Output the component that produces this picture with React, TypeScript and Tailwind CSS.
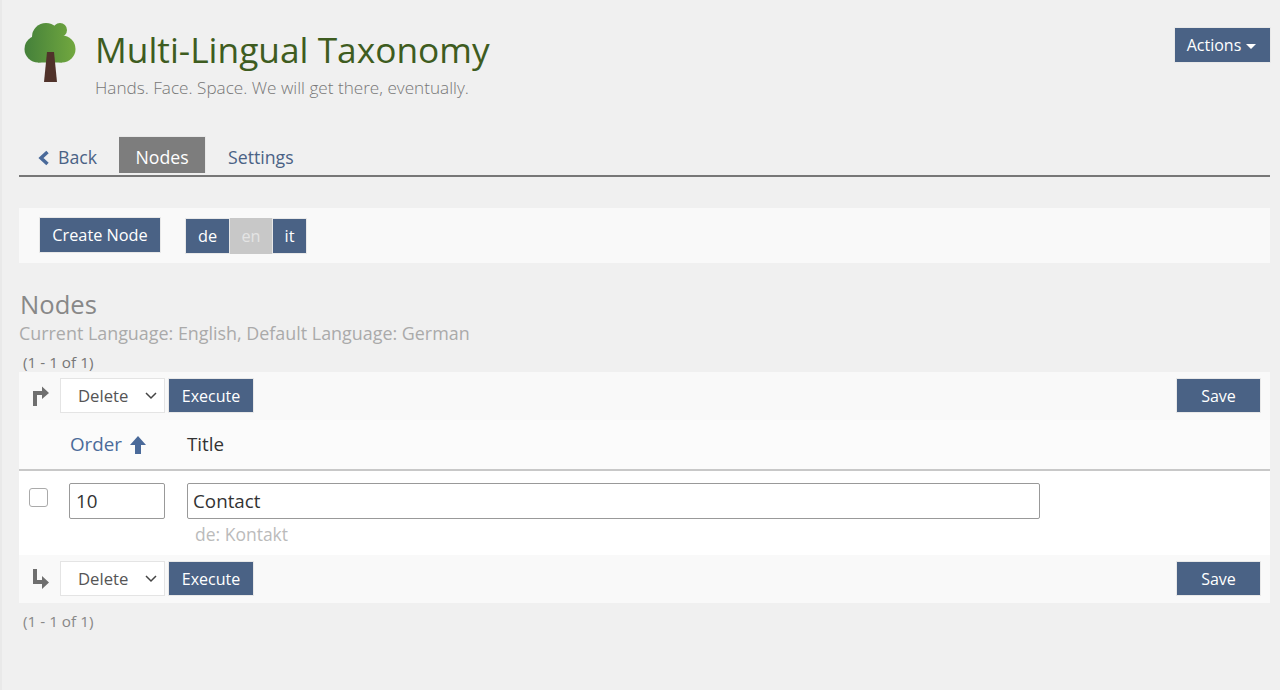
const FONT = "font-['Open_Sans','Liberation_Sans',sans-serif]";
const BTN = "flex items-center justify-center bg-[#4a6285] text-white border border-[#e8e8e8]";

function TreeLogo() {
  return (
    <svg width="54" height="62" viewBox="0 0 54 62" className="block">
      <defs>
        <linearGradient id="crown" gradientUnits="userSpaceOnUse" x1="0" x2="52" y1="0" y2="0">
          <stop offset="0" stopColor="#44803a" />
          <stop offset="1" stopColor="#72a83f" />
        </linearGradient>
      </defs>
      <g fill="url(#crown)">
        <circle cx="22" cy="15" r="14" />
        <circle cx="36" cy="8" r="7" />
        <circle cx="14" cy="27" r="13.5" />
        <circle cx="38" cy="27" r="13.5" />
        <rect x="14" y="12" width="24" height="28.5" />
      </g>
      <path fill="#50322a" d="M23 30 H30 L33 60 H20 Z" />
    </svg>
  );
}

function DeleteSelect() {
  return (
    <div className="flex h-[35px] w-[105px] items-center justify-between border border-[#e4e4e4] bg-white pl-[17px] pr-[6px] text-[16.7px] text-[#555]">
      <span>Delete</span>
      <svg width="14" height="14" viewBox="0 0 14 14" fill="none" stroke="#444" strokeWidth="1.5" className="mb-[1px]">
        <path d="M2 5l5 5 5-5" />
      </svg>
    </div>
  );
}

function ActionBar({ icon }: { icon: React.ReactNode }) {
  return (
    <div className="flex h-[48px] items-start justify-between bg-[#f9f9f9] pl-[12px] pr-[9px] pt-[6px]">
      <div className="flex items-center">
        <div className="w-[29px]">{icon}</div>
        <DeleteSelect />
        <div className={`${BTN} ml-[3px] h-[35px] w-[86px] text-[16px]`}>Execute</div>
      </div>
      <div className={`${BTN} h-[35px] w-[85px] text-[16px]`}>Save</div>
    </div>
  );
}

export default function App() {
  return (
    <div className={`${FONT} h-[690px] w-[1280px] overflow-hidden border-l-2 border-[#e9e9e9] bg-[#f0f0f0] pl-[17px] pr-[10px]`}>
      <header className="flex h-[137px] items-start justify-between">
        <div className="flex items-start">
          <div className="ml-[5px] mt-[22px]">
            <TreeLogo />
          </div>
          <div className="ml-[17px] mt-[24px]">
            <h1 className="text-[35.3px] leading-[50px] text-[#3e5c20]">Multi-Lingual Taxonomy</h1>
            <p className="mt-[2px] text-[17.15px] font-light leading-[24px] text-[#777]">
              Hands. Face. Space. We will get there, eventually.
            </p>
          </div>
        </div>
        <div className={`${BTN} -mr-[1px] mt-[27px] h-[36px] w-[97px] gap-[5px] pr-[2px] text-[16px]`}>
          Actions
          <span className="mt-[2px] border-x-[5px] border-t-[5px] border-x-transparent border-t-white" />
        </div>
      </header>

      <nav className="flex h-[40px] items-start border-b-2 border-[#777] text-[17.7px] text-[#4a6285]">
        <div className="flex h-[37px] w-[100px] items-center pl-[18px] pt-[4px]">
          <svg width="14" height="16" viewBox="0 0 14 16" className="mr-[7px]" fill="none" stroke="#4a6a9a" strokeWidth="3.5">
            <path d="M10.5 2 L4 8 L10.5 14" />
          </svg>
          Back
        </div>
        <div className="-mt-[1px] flex h-[37px] w-[87px] items-center justify-center border-r border-t border-[#e8e8e8] bg-[#7d7d7d] pt-[5px] text-white">
          Nodes
        </div>
        <div className="ml-[22px] flex h-[37px] items-center pt-[4px]">Settings</div>
      </nav>

      <section className="mt-[31px] flex h-[55px] items-start bg-[#f9f9f9] pl-[20px] pt-[9px]">
        <div className={`${BTN} h-[36px] w-[122px] text-[16.3px]`}>Create Node</div>
        <div className="ml-[24px] mt-[1px] flex h-[36px] text-[16.3px]">
          <div className={`${BTN} w-[45px] text-[#e8e8e8]`}>de</div>
          <div className="flex w-[42px] items-center justify-center bg-[#c8c8c8] text-[#e4e4e4]">en</div>
          <div className={`${BTN} w-[35px] text-[#e8e8e8]`}>it</div>
        </div>
      </section>

      <h2 className="ml-[1px] mt-[25px] text-[25.6px] leading-[34px] text-[#888]">Nodes</h2>
      <p className="-mt-[1px] text-[17.9px] leading-[24px] text-[#aaa]">Current Language: English, Default Language: German</p>
      <p className="ml-[4px] mt-[7px] text-[15.3px] leading-[20px] text-[#777]">(1 - 1 of 1)</p>

      <div>
        <ActionBar
          icon={
            <svg width="20" height="22" viewBox="0 0 20 22" fill="#6f6f6f">
              <path d="M2 21 V6 H11 V1.5 L18 8 L11 14 V10 H6 V21 Z" />
            </svg>
          }
        />
        <div className="flex h-[51px] items-center border-b-2 border-[#c8c8c8] bg-[#fbfbfb] text-[18.8px]">
          <div className="ml-[51px] flex w-[117px] items-center text-[#4a6a9a]">
            Order
            <svg width="16" height="20" viewBox="0 0 16 20" className="ml-[8px]" fill="#4a6a9a">
              <path d="M8 1 L16 10 H11 V19 H5 V10 H0 Z" />
            </svg>
          </div>
          <div className="text-[#333]">Title</div>
        </div>
        <div className="flex h-[84px] items-start bg-white pt-[12px]">
          <div className="ml-[10px] mt-[5px] h-[19px] w-[19px] rounded-[3px] border border-[#aaa] bg-white" />
          <div className="ml-[21px] flex h-[36px] w-[96px] items-center rounded-[2px] border border-[#999] bg-white pl-[6px] text-[18.8px] text-[#333]">
            10
          </div>
          <div className="ml-[22px]">
            <div className="flex h-[36px] w-[853px] items-center rounded-[2px] border border-[#999] bg-white pl-[5px] text-[18.8px] text-[#333]">
              Contact
            </div>
            <p className="ml-[8px] mt-[3px] text-[17.5px] leading-[24px] text-[#bbb]">de: Kontakt</p>
          </div>
        </div>
        <ActionBar
          icon={
            <svg width="20" height="22" viewBox="0 0 20 22" fill="#6f6f6f">
              <path d="M2 1 H6 V12 H11 V8 L18 14.5 L11 21 V16 H2 Z" />
            </svg>
          }
        />
      </div>
      <p className="ml-[4px] mt-[8px] text-[15.3px] leading-[20px] text-[#888]">(1 - 1 of 1)</p>
    </div>
  );
}
